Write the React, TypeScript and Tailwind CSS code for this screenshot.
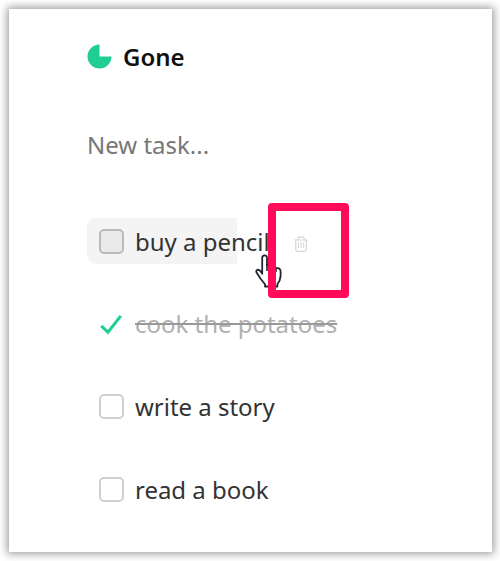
import clsx from 'clsx';

interface Task {
  id: number;
  label: string;
  done?: boolean;
  hovered?: boolean;
}

const tasks: Task[] = [
  { id: 1, label: 'buy a pencil', hovered: true },
  { id: 2, label: 'cook the potatoes', done: true },
  { id: 3, label: 'write a story' },
  { id: 4, label: 'read a book' },
];

function Logo() {
  return (
    <svg width="25" height="25" viewBox="0 0 25 25" className="shrink-0">
      <path d="M12.5 12.5V.5a12 12 0 1 0 12 12z" fill="#20ce92" />
    </svg>
  );
}

function CheckIcon() {
  return (
    <svg width="24" height="24" viewBox="0 0 24 24" fill="none" className="shrink-0">
      <path d="M2.2 13.8 9 20.2 21.8 3.9" stroke="#20ce92" strokeWidth="3" />
    </svg>
  );
}

function TrashIcon() {
  return (
    <svg width="16" height="18" viewBox="0 0 16 18" fill="none" stroke="#d6d6d6" strokeWidth="1.2">
      <path d="M1.2 5h13.6M4.6 4.8l1-2.6h5l1 2.6M2.8 5v9.8q0 1.5 1.5 1.5h7.6q1.5 0 1.5-1.5V5" />
      <path d="M5.5 7.3v5.7M8.1 7.3v5.7M10.7 7.3v5.7" strokeWidth="1" />
    </svg>
  );
}

function HandCursor() {
  return (
    <svg width="28" height="35" viewBox="0 0 28 35" className="absolute left-[168px] top-[36px]">
      <path
        d="M7.2 20.5V4q0-2.6 2.4-2.6T12 4v7.2q3.7-.8 4.4 1 3.6-.6 4.6 1.6 4.5 0 4.6 3.6v4.6l-1 4.5-2.2 3.6V32.5H10v-2.2L5.8 25 1.4 18.3q-.6-2.3 1.6-2.7 1.9.2 4.2 4"
        fill="#fff"
        stroke="#24242f"
        strokeWidth="1.8"
        strokeLinejoin="round"
      />
      <path d="M12 10v7M16.4 12v5.5M21 14v4" stroke="#24242f" strokeWidth="1.6" />
    </svg>
  );
}

function TaskRow({ task }: { task: Task }) {
  return (
    <li
      className={clsx(
        'relative flex h-[46px] w-[150px] items-center whitespace-nowrap rounded-l-[9px] pl-3',
        task.hovered && 'bg-[#f4f4f4]',
      )}
    >
      {task.done ? (
        <CheckIcon />
      ) : (
        <span
          className={clsx(
            'h-[25px] w-[25px] shrink-0 rounded-[5px] border-2',
            task.hovered ? 'border-[#bbb] bg-[#e9e9e9]' : 'border-[#cfcfcf] bg-white',
          )}
        />
      )}
      <span
        className={clsx(
          'pt-px text-[24px] tracking-[-0.02px]',
          task.done ? 'ml-3 text-[#b0b0b0] line-through decoration-[#999] decoration-[1.5px]' : 'ml-[11px] text-[#333]',
        )}
      >
        {task.label}
      </span>
      {task.hovered && (
        <>
          <HandCursor />
          <span className="absolute -top-[15px] left-[181px] flex h-[95px] w-[81px] items-center justify-center rounded-[4px] border-8 border-[#ff0b59] pb-[14px] pr-[15px]">
            <TrashIcon />
          </span>
        </>
      )}
    </li>
  );
}

export default function App() {
  return (
    <div className="h-[561px] w-[500px] overflow-hidden bg-white p-[9px] font-['Noto_Sans',sans-serif]">
      <main className="h-[543px] w-[483px] bg-white pl-[78px] pt-[31px] shadow-[0_0_8px_2px_rgba(0,0,0,0.38)]">
        <header className="flex h-[33px] items-center gap-[11px]">
          <Logo />
          <h1 className="text-[24px] font-semibold text-[#111]">Gone</h1>
        </header>
        <input
          placeholder="New task..."
          className="mt-[55px] block h-[33px] w-[300px] text-[24px] outline-none placeholder:text-[#777]"
        />
        <ul className="mt-[57px] flex flex-col gap-[36.8px]">
          {tasks.map((task) => (
            <TaskRow key={task.id} task={task} />
          ))}
        </ul>
      </main>
    </div>
  );
}
